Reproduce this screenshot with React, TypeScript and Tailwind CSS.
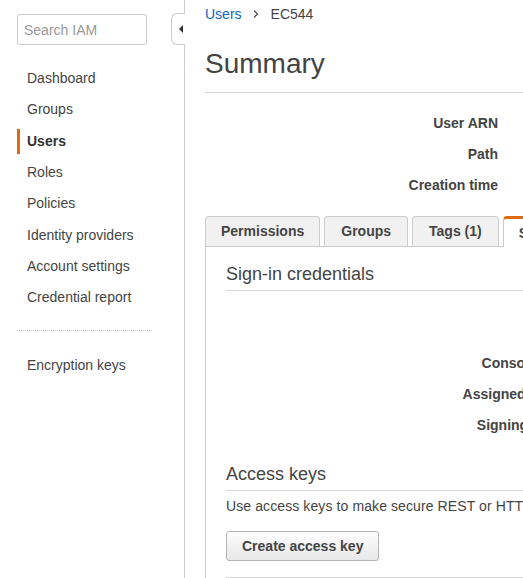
import { FC } from "react";

const navItems = [
  "Dashboard",
  "Groups",
  "Users",
  "Roles",
  "Policies",
  "Identity providers",
  "Account settings",
  "Credential report",
];

const NavItem: FC<{ label: string; active?: boolean }> = ({ label, active }) => (
  <div className="h-[31.3px] flex items-center pl-[17px]">
    <span
      className={`h-[25px] flex items-center pl-[7px] border-l-[3px] ${
        active ? "border-[#dd6b10] font-bold text-[#333]" : "border-transparent"
      }`}
    >
      {label}
    </span>
  </div>
);

const Sidebar: FC = () => (
  <aside className="relative w-[185px] shrink-0 border-r border-[#cccccc] pt-[14px]">
    <input
      type="text"
      placeholder="Search IAM"
      className="ml-[17px] w-[130px] h-[31px] border border-[#cccccc] rounded-[3px] px-[6px] text-[14px] text-[#444] placeholder:text-[#999] outline-none"
    />
    <nav className="mt-[18px]">
      {navItems.map(item => (
        <NavItem key={item} label={item} active={item === "Users"} />
      ))}
    </nav>
    <div className="mt-[17px] ml-[17px] w-[135px] border-t border-dotted border-[#bbbbbb]" />
    <div className="mt-[18px]">
      <NavItem label="Encryption keys" />
    </div>
    {/* collapse handle */}
    <button
      type="button"
      className="absolute top-[13px] right-[-1px] w-[14px] h-[32px] bg-white border border-r-0 border-[#cccccc] rounded-l-[6px] flex items-center pl-[7px]"
    >
      <svg width="4" height="8" viewBox="0 0 4 8">
        <path d="M4 0 L0 4 L4 8 Z" fill="#333" />
      </svg>
    </button>
  </aside>
);

const Tab: FC<{ label: string; active?: boolean; pad?: string }> = ({ label, active, pad = "px-[15px]" }) =>
  active ? (
    <div className={`relative z-10 h-[31px] -mb-px bg-white border-l border-r border-t-[3px] border-[#cccccc] border-t-[#dd6b10] rounded-t-[4px] ${pad} flex items-center font-bold`}>
      {label}
    </div>
  ) : (
    <div className={`h-[30px] bg-[#f1f1f1] border border-b-0 border-[#cccccc] rounded-t-[4px] ${pad} flex items-center font-bold`}>
      {label}
    </div>
  );

const LabelRow: FC<{ label: string; width: string }> = ({ label, width }) => (
  <div className={`h-[31px] flex items-center justify-end font-bold ${width}`}>{label}</div>
);

export default function App() {
  return (
    <div
      className="w-[523px] h-[578px] overflow-hidden flex bg-white text-[14px] text-[#444]"
      style={{ fontFamily: '"Liberation Sans", Arial, sans-serif' }}
    >
      <Sidebar />
      <main className="w-[760px] shrink-0 pl-[20px]">
        <div className="pt-[6px] leading-[16px] flex items-center">
          <a className="text-[#1166bb]">Users</a>
          <svg className="ml-[11px]" width="6" height="8" viewBox="0 0 6 8">
            <path d="M1 0.5 L4.5 4 L1 7.5" fill="none" stroke="#555" strokeWidth="1.3" />
          </svg>
          <span className="ml-[12px]">EC544</span>
        </div>

        <h1 className="mt-[26px] text-[28px] leading-[32px] pb-[12px] border-b border-[#d5d5d5]">Summary</h1>

        <div className="mt-[15px]">
          <LabelRow label="User ARN" width="w-[293px]" />
          <LabelRow label="Path" width="w-[293px]" />
          <LabelRow label="Creation time" width="w-[293px]" />
        </div>

        <div className="mt-[15px] flex items-end gap-[4px]">
          <Tab label="Permissions" />
          <Tab label="Groups" pad="px-[16px]" />
          <Tab label="Tags (1)" pad="px-[16px]" />
          <Tab label="Security credentials" active />
          <Tab label="Access Advisor" />
        </div>

        <section className="border-t border-l border-[#cccccc] pl-[20px]">
          <h2 className="pt-[16px] pb-[5px] text-[18px] leading-[22px] border-b border-[#d5d5d5]">
            Sign-in credentials
          </h2>

          <div className="mt-[57px]">
            <LabelRow label="Console password" width="w-[380px]" />
            <LabelRow label="Assigned MFA device" width="w-[380px]" />
            <LabelRow label="Signing certificates" width="w-[380px]" />
          </div>

          <h2 className="mt-[22px] pb-[5px] text-[18px] leading-[22px] border-b border-[#d5d5d5]">Access keys</h2>
          <p className="mt-[5px] leading-[20px] whitespace-nowrap tracking-[0.1px]">
            Use access keys to make secure REST or HTTP Query protocol calls to AWS service APIs.
          </p>
          <button
            type="button"
            className="mt-[15px] h-[30px] px-[15px] border border-[#b5b5b5] rounded-[3px] bg-gradient-to-b from-[#fdfdfd] to-[#e8e8e8] font-bold text-[#444]"
          >
            Create access key
          </button>
          <div className="mt-[16px] border-t border-[#d5d5d5]" />
        </section>
      </main>
    </div>
  );
}
